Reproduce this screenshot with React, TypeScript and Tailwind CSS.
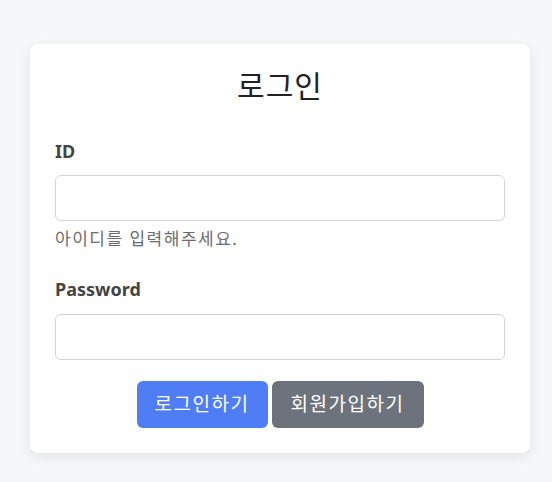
import React, { useState } from 'react';

const App: React.FC = () => {
  const [userId, setUserId] = useState('');
  const [password, setPassword] = useState('');

  return (
    <div className="min-h-[482px] bg-[#f6f7f9] pt-[44px] pl-[30px] font-['Noto_Sans','Noto_Sans_CJK_KR',sans-serif]">
      <div className="w-[500px] rounded-lg bg-white px-[25px] pt-[20px] pb-[25px] shadow-[0_4px_14px_rgba(0,0,0,0.08)]">
        <h2 className="text-center text-[30px] leading-[44px] tracking-[1px] font-normal text-[#222]">로그인</h2>

        <form className="mt-[30px]" onSubmit={(e) => e.preventDefault()}>
          <label className="block text-[18px] leading-[26px] font-bold text-[#444]">ID</label>
          <input
            type="text"
            value={userId}
            onChange={(e) => setUserId(e.target.value)}
            className="mt-[11px] block h-[46px] w-full rounded-md border border-[#d4d4d8] bg-white px-3 outline-none"
          />
          <p className="mt-[6px] text-[17px] leading-[24px] tracking-[1.5px] text-[#6c6c6c]">아이디를 입력해주세요.</p>

          <label className="mt-[25px] block text-[18px] leading-[26px] font-bold text-[#444]">Password</label>
          <input
            type="password"
            value={password}
            onChange={(e) => setPassword(e.target.value)}
            className="mt-[12px] block h-[46px] w-full rounded-md border border-[#d4d4d8] bg-white px-3 outline-none"
          />

          <div className="mt-[21px] flex justify-center gap-[4px]">
            <button type="submit" className="h-[47px] w-[131px] rounded-md bg-[#4f7df6] text-[19px] tracking-[1.5px] text-white">
              로그인하기
            </button>
            <button type="button" className="h-[47px] w-[152px] rounded-md bg-[#6c737c] text-[19px] tracking-[1.5px] text-white">
              회원가입하기
            </button>
          </div>
        </form>
      </div>
    </div>
  );
};

export default App;
